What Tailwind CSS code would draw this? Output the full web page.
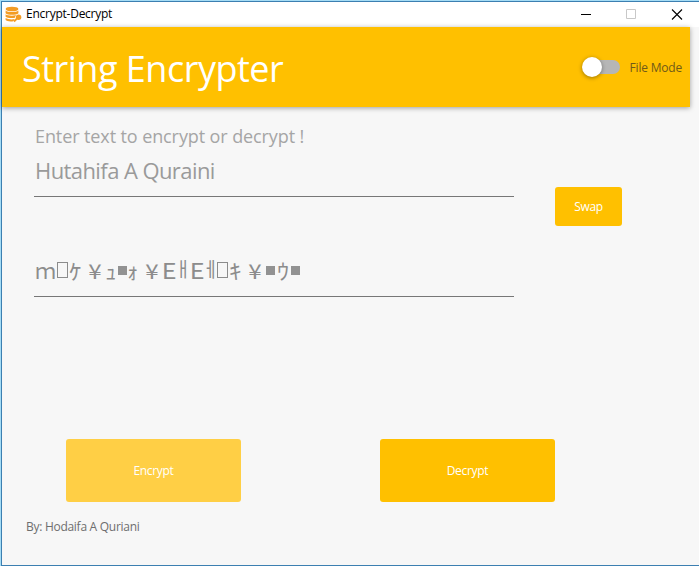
<!DOCTYPE html>
<html lang="en"><head><meta charset="utf-8"><title>Encrypt-Decrypt</title>
<script src="https://cdn.jsdelivr.net/npm/@tailwindcss/browser@4"></script></head>
<body class="overflow-hidden">
<div class="w-[699px] h-[566px] bg-[#a5dcf5] pl-px pt-px">
<div class="h-[565px] border-l border-t border-b border-[#3c7fb1] bg-[#f7f7f7] flex flex-col font-['Open_Sans','Noto_Sans',sans-serif] whitespace-nowrap">
  <div class="h-[25px] shrink-0 bg-white flex items-center">
    <svg class="ml-[3px] -mt-px shrink-0" width="17" height="17" viewBox="0 0 17 17" fill="#f39c24"><ellipse cx="7" cy="3" rx="6.4" ry="2.3"/><path d="M.6 4.6c2 2 10.8 2 12.8 0v2.7c-2 2-10.8 2-12.8 0zM.6 8.3c2 1.8 9.5 1.9 12.4.3-2 .5-3 1.700-3 3.2-4 .5-8.2.1-9.4-1.100zM.6 12c2 1.400 6 1.700 9 1.100l-1.200 2.200c-3.300.6-7 0-7.800-1.200z"/><circle cx="13.6" cy="11.2" r="2.7"/><path d="M12 12.500l-3 3" stroke="#f39c24" stroke-width="1.8"/></svg>
    <span class="ml-[4px] -mt-[2px] text-[12px] leading-[16px] tracking-[-0.25px] text-black">Encrypt-Decrypt</span>
    <svg class="ml-auto" width="118" height="25" viewBox="0 0 118 25" fill="none"><path d="M0 12.5h10" stroke="#000"/><path d="M45.500 7.500h9v9h-9z" stroke="#c8c8c8"/><path d="M91 7.500l10 10m0-10l-10 10" stroke="#000" stroke-width="1.100"/></svg>
  </div>
  <header class="w-[688px] h-[80px] shrink-0 bg-[#ffc000] shadow-[0_1px_5px_#0000005c] flex items-center">
    <h1 class="ml-[20px] mt-[4px] text-[36px] leading-[48px] tracking-[-0.5px] text-white">String Encrypter</h1>
    <div class="ml-auto w-[38px] h-[20px] flex items-center">
      <div class="size-[20px] shrink-0 rounded-full bg-white shadow-[0_1px_4px_#0006] z-10"></div>
      <div class="-ml-[12px] w-[30px] h-[14px] rounded-full bg-[#b6b6b6]"></div>
    </div>
    <span class="ml-[10px] mr-[8px] mt-px text-[12px] tracking-[-0.2px] text-[#705a19]">File Mode</span>
  </header>
  <main class="grow flex flex-col pl-[32px]">
    <div class="flex items-start">
      <section class="w-[480px] text-[#9a9a9a]">
        <label class="block mt-[17px] h-[25px] pl-px text-[18px] leading-[25px] tracking-[-0.1px] text-[#a5a5a5]">Enter text to encrypt or decrypt !</label>
        <div class="h-[48px] pl-px pt-[6px] border-b border-[#777] text-[22px] leading-[30px] tracking-[-0.58px]">Hutahifa A Quraini</div>
      </section>
      <button class="ml-[41px] mt-[80px] w-[67px] h-[39px] rounded-[3px] bg-[#ffc000] text-white text-[12px] tracking-[-0.3px]">Swap</button>
    </div>
    <div class="w-[480px] h-[71px] border-b border-[#777] pl-px pt-[28px] flex text-[21px] leading-[32px] text-[#8c8c8c] font-['Noto_Sans_CJK_JP','Noto_Sans_CJK_KR',sans-serif]">
      <span class="w-[21px]">ｍ</span><span class="w-[13px] flex justify-center pt-[8px]"><i class="w-[11px] h-[16px] border border-[#8c8c8c]"></i></span><span class="w-[15px] origin-left scale-x-120">ｹ</span><span class="w-[21px] flex justify-center"><b class="font-normal scale-x-115">¥</b></span><span class="w-[13px] origin-left scale-x-110">ｭ</span><span class="w-[9px]"><i class="block mt-[12px] size-[9px] bg-[#929292]"></i></span><span class="w-[12px] origin-left scale-x-110">ｫ</span><span class="w-[22px] flex justify-center pl-[4px]"><b class="font-normal scale-x-115">¥</b></span><span class="w-[16px] flex justify-center"><b class="font-normal scale-x-120">E</b></span><span class="w-[12px] flex justify-center text-[17px] scale-y-120">ￃ</span><span class="w-[16px] flex justify-center"><b class="font-normal scale-x-120">E</b></span><span class="w-[11px] flex justify-center text-[17px] scale-y-120">ￇ</span><span class="w-[13px] flex justify-center pt-[8px]"><i class="w-[11px] h-[16px] border border-[#8c8c8c]"></i></span><span class="w-[15px] origin-left scale-x-120">ｷ</span><span class="w-[22px] flex justify-center"><b class="font-normal scale-x-115">¥</b></span><span class="w-[11px]"><i class="block mt-[12px] size-[9px] bg-[#929292]"></i></span><span class="w-[14px] origin-left scale-x-115">ｳ</span><span><i class="block mt-[12px] size-[9px] bg-[#929292]"></i></span>
    </div>
    <div class="mt-auto pl-[32px] flex gap-[139px]">
      <button class="w-[175px] h-[63px] rounded-[3px] bg-[#ffcf45] text-white text-[12px] tracking-[-0.3px]">Encrypt</button>
      <button class="w-[175px] h-[63px] rounded-[3px] bg-[#ffc000] text-white text-[12px] tracking-[-0.3px]">Decrypt</button>
    </div>
    <footer class="h-[63px] -ml-[8px] pt-[17px] text-[12px] leading-[16px] tracking-[-0.28px] text-[#6e6e6e]">By: Hodaifa A Quriani</footer>
  </main>
</div></div></body></html>
